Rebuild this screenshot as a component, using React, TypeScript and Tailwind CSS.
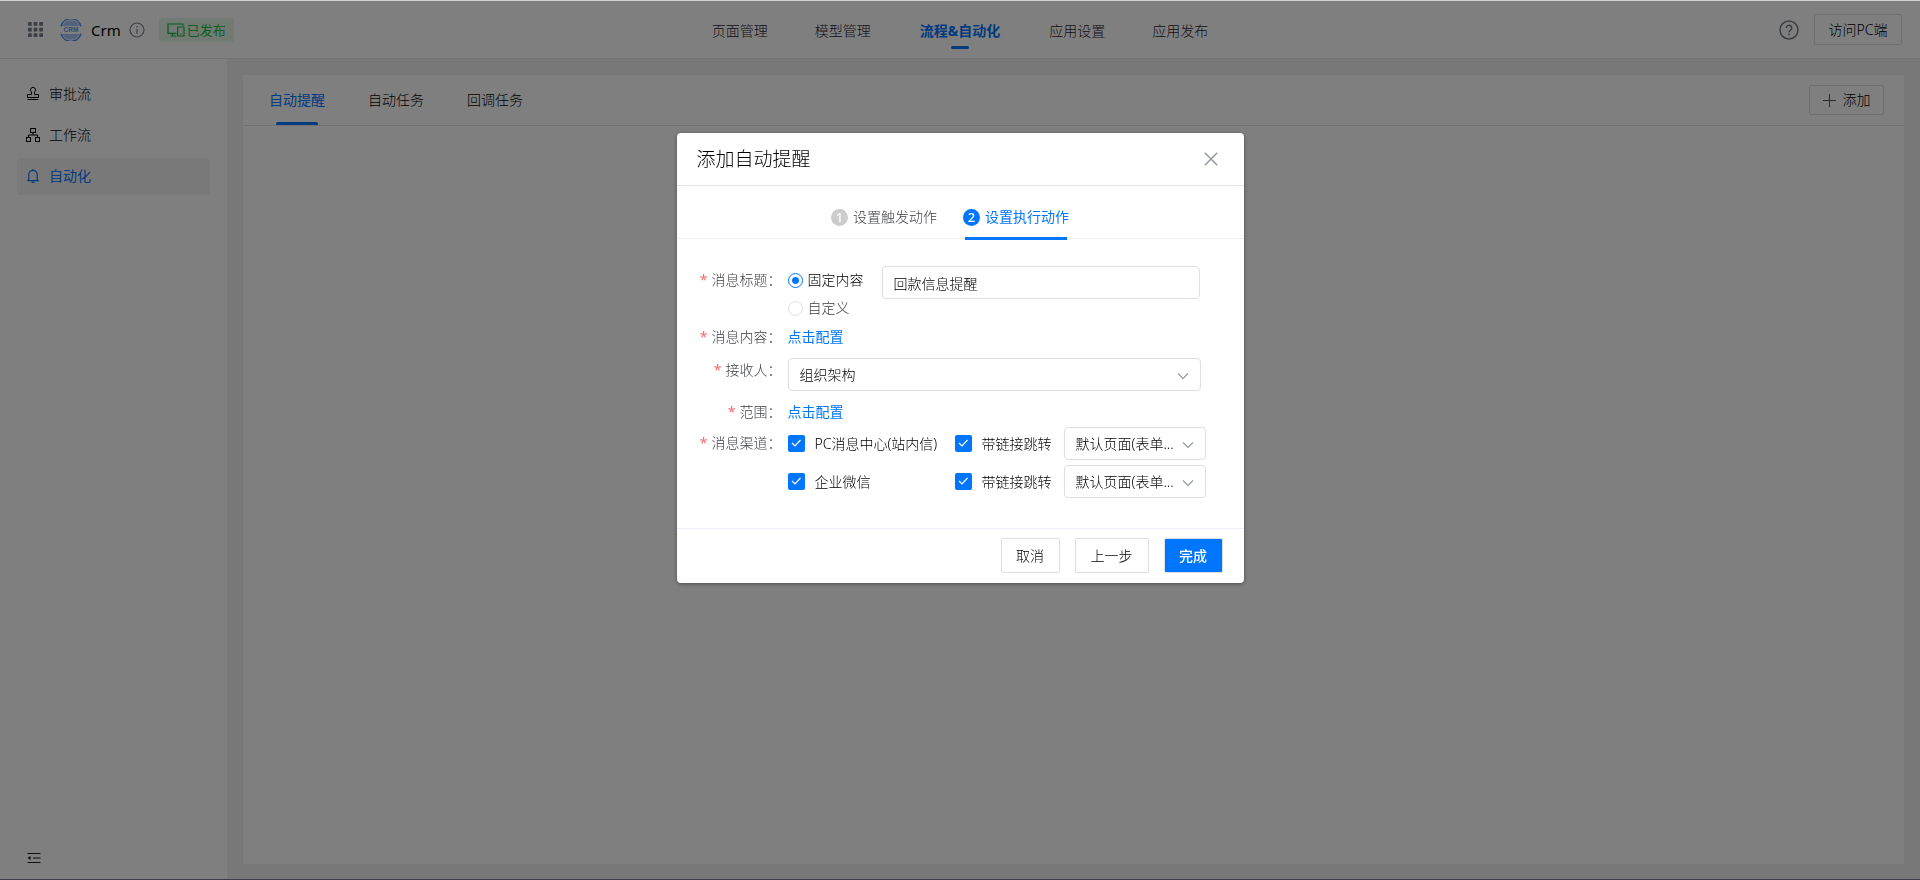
import React, { useState } from 'react';
import type { ReactNode } from 'react';

const TOP_NAV = ['页面管理', '模型管理', '流程&自动化', '应用设置', '应用发布'];
const TABS = ['自动提醒', '自动任务', '回调任务'];
const CHANNELS = ['PC消息中心(站内信)', '企业微信'];

interface IconProps {
  className?: string;
}

function AppsIcon({ className }: IconProps) {
  return (
    <svg viewBox="0 0 16 16" className={className} fill="currentColor" aria-hidden="true">
      {[0, 6, 12].map((y) => [0, 6, 12].map((x) => <rect key={`${x}-${y}`} x={x} y={y} width="4" height="4" rx="0.5" />))}
    </svg>
  );
}

function CrmLogo({ className }: IconProps) {
  return (
    <svg viewBox="0 0 22 22" className={className} aria-hidden="true">
      <path d="M2 7a10 10 0 0 1 18 0z" fill="#a8c6fa" />
      <path d="M2 15a10 10 0 0 0 18 0z" fill="#a8c6fa" />
      <path d="M1 7.2a10.4 10.4 0 0 1 20 0M1 14.8a10.4 10.4 0 0 0 20 0" fill="none" stroke="#4a86f0" strokeWidth="1.4" />
      <text x="11" y="13.3" textAnchor="middle" fontSize="6.5" fontWeight="700" fill="#5f92ee" fontFamily="Liberation Sans, sans-serif">
        CRM
      </text>
    </svg>
  );
}

function InfoIcon({ className }: IconProps) {
  return (
    <svg viewBox="0 0 16 16" className={className} fill="none" stroke="currentColor" strokeWidth="1.2" aria-hidden="true">
      <circle cx="8" cy="8" r="7" />
      <path d="M8 7v5M8 4v1.5" />
    </svg>
  );
}

function DevicesIcon({ className }: IconProps) {
  return (
    <svg viewBox="0 0 18 14" className={className} fill="none" stroke="currentColor" strokeWidth="1.2" aria-hidden="true">
      <path d="M9.5 10.4H1V1h15v1.8M5.5 10.4v2.4M3.5 13h6" />
      <rect x="10.6" y="4" width="6.4" height="9" rx="0.6" />
      <path d="M13 11h1.6" />
    </svg>
  );
}

function HelpIcon({ className }: IconProps) {
  return (
    <svg viewBox="0 0 20 20" className={className} fill="none" stroke="currentColor" strokeWidth="1.5" aria-hidden="true">
      <circle cx="10" cy="10" r="9" />
      <path d="M7.3 8a2.7 2.7 0 1 1 4.3 2.1c-1 .7-1.6 1.1-1.6 2.2" />
      <path d="M10 13.6v1.6" />
    </svg>
  );
}

function StampIcon({ className }: IconProps) {
  return (
    <svg viewBox="0 0 16 16" className={className} fill="none" stroke="currentColor" strokeWidth="1" aria-hidden="true">
      <path d="M6.5 8.5V6.1a2.6 2.6 0 1 1 3 0v2.4h4v3h-11v-3zM2.5 13.5h11" />
    </svg>
  );
}

function FlowIcon({ className }: IconProps) {
  return (
    <svg viewBox="0 0 16 16" className={className} fill="none" stroke="currentColor" strokeWidth="1" aria-hidden="true">
      <rect x="5.5" y="1.5" width="5" height="4" />
      <rect x="1.5" y="10.5" width="4" height="4" />
      <rect x="10.5" y="10.5" width="4" height="4" />
      <path d="M8 5.5v2.5M3.5 10.5V8h9v2.5" />
    </svg>
  );
}

function BellIcon({ className }: IconProps) {
  return (
    <svg viewBox="0 0 16 16" className={className} fill="none" stroke="currentColor" strokeWidth="1.2" aria-hidden="true">
      <path d="M3.8 12.4V6.6a4.2 4.2 0 0 1 8.4 0v5.8M2.2 12.6h11.6M8 1v1.4M6.6 14.4h2.8" />
    </svg>
  );
}

function CollapseIcon({ className }: IconProps) {
  return (
    <svg viewBox="0 0 14 12" className={className} fill="none" stroke="currentColor" strokeWidth="1" aria-hidden="true">
      <path d="M.5 1.5h13M6 6h7.5M.5 10.5h13" />
      <path d="M.5 6 3.5 4v4z" fill="currentColor" stroke="none" />
    </svg>
  );
}

function ChevronIcon({ className }: IconProps) {
  return (
    <svg viewBox="0 0 12 8" className={className} fill="none" stroke="currentColor" strokeWidth="1.1" aria-hidden="true">
      <path d="m1 1.5 5 5 5-5" />
    </svg>
  );
}

const MENU = [
  { label: '审批流', Icon: StampIcon },
  { label: '工作流', Icon: FlowIcon },
  { label: '自动化', Icon: BellIcon },
];

function Header() {
  return (
    <header className="grid h-[59px] grid-cols-[1fr_auto_1fr] items-center border-t border-b border-t-[#d0d0d0] border-b-[#e4e4e4] bg-white pl-7 pr-[18px]">
      <div className="flex items-center">
        <button type="button" aria-label="应用列表" className="text-[#777d88]">
          <AppsIcon className="size-[15px]" />
        </button>
        <CrmLogo className="ml-[17px] size-[22px]" />
        <span className="ml-[9px] text-[15px] font-normal text-black">Crm</span>
        <InfoIcon className="ml-2 size-4 text-[#777d88]" />
        <span className="ml-3.5 flex h-6 items-center gap-0.5 rounded-xs bg-[#e3f7e8] px-2 text-[13px] font-normal text-[#12b83f]">
          <DevicesIcon className="h-3.5 w-[18px]" />
          已发布
        </span>
      </div>

      <nav className="mr-2.5 flex h-full items-center gap-[47px] text-[#1f242e]">
        {TOP_NAV.map((item) => {
          const active = item === '流程&自动化';
          return (
            <a
              key={item}
              href="#"
              className={active ? 'relative flex h-full items-center px-0.5 pt-0.5 font-bold text-[#0076ff]' : 'flex h-full items-center pt-0.5'}
            >
              {item}
              {active && <span className="absolute bottom-[9px] left-1/2 h-[3px] w-[18px] -translate-x-1/2 rounded-full bg-[#0076ff]" />}
            </a>
          );
        })}
      </nav>

      <div className="flex items-center justify-end gap-[15px]">
        <button type="button" aria-label="帮助" className="text-[#777d88]">
          <HelpIcon className="size-5" />
        </button>
        <button type="button" className="h-[31px] w-[88px] rounded-xs border border-[#dcdcdc] text-black">
          访问PC端
        </button>
      </div>
    </header>
  );
}

function Sidebar() {
  return (
    <aside className="flex w-[227px] shrink-0 flex-col justify-between bg-white pt-[17px] pb-[15px]">
      <ul className="flex flex-col gap-1 px-[17px]">
        {MENU.map(({ label, Icon }) => (
          <li key={label}>
            <a
              href="#"
              className={
                label === '自动化'
                  ? 'flex h-[37px] items-center gap-2 rounded-sm bg-[#f2f2f2] pb-0.5 pl-2 font-normal text-[#0076ff]'
                  : 'flex h-[37px] items-center gap-2 pb-0.5 pl-2 text-black'
              }
            >
              <Icon className="size-4" />
              {label}
            </a>
          </li>
        ))}
      </ul>
      <button type="button" aria-label="收起菜单" className="ml-[27px] w-3.5 text-[#1a1a1a]">
        <CollapseIcon className="h-3 w-3.5" />
      </button>
    </aside>
  );
}

interface FormRowProps {
  label: string;
  className?: string;
  labelClass: string;
  children: ReactNode;
}

function FormRow({ label, className = '', labelClass, children }: FormRowProps) {
  return (
    <div className={`flex gap-1.5 ${className}`}>
      <span className={`w-[105px] shrink-0 text-right text-[#3e4045] ${labelClass}`}>
        <span className="mr-1 font-normal text-[#f56c6c]">*</span>
        {label}：
      </span>
      {children}
    </div>
  );
}

function SelectBox({ label, value, className }: { label: string; value: string; className: string }) {
  return (
    <div className={`relative ${className}`}>
      <select
        aria-label={label}
        className="h-[33px] w-full appearance-none rounded-sm border border-[#dcdfe6] bg-white pl-[11px] pr-6 text-black outline-none"
      >
        <option>{value}</option>
      </select>
      <ChevronIcon className="pointer-events-none absolute top-3.5 right-3 h-2 w-3 text-[#8f959e]" />
    </div>
  );
}

function CheckField({ label }: { label: string }) {
  return (
    <label className="flex items-center gap-2.5 whitespace-nowrap text-black">
      <span className="grid size-[17px] shrink-0">
        <input type="checkbox" defaultChecked className="col-start-1 row-start-1 size-[17px] appearance-none rounded-xs bg-[#0076ff]" />
        <svg
          viewBox="0 0 17 17"
          className="pointer-events-none col-start-1 row-start-1 size-[17px]"
          fill="none"
          stroke="white"
          strokeWidth="1.2"
          aria-hidden="true"
        >
          <path d="m4 8 3 3 5.5-6" />
        </svg>
      </span>
      {label}
    </label>
  );
}

function Step({ index, label, active }: { index: number; label: string; active?: boolean }) {
  return (
    <li
      className={
        active ? 'relative flex items-center gap-[5px] pt-2.5 font-normal text-[#0076ff]' : 'flex items-center gap-[5px] pt-2.5 text-[#3e4045]'
      }
    >
      <span
        className={
          active
            ? 'flex size-[17px] items-center justify-center rounded-full bg-[#0076ff] text-[13px] font-medium text-white'
            : 'flex size-[17px] items-center justify-center rounded-full bg-[#cccccc] text-[13px] font-medium text-white'
        }
      >
        {index}
      </span>
      {label}
      {active && <span className="absolute inset-x-0.5 -bottom-0.5 h-[3px] bg-[#0076ff]" />}
    </li>
  );
}

const RADIO =
  'size-[15px] appearance-none rounded-full border border-[#dcdfe6] bg-white checked:border-[#0076ff] checked:bg-[radial-gradient(circle,#0076ff_3px,white_4px)]';

function ReminderDialog() {
  const [mode, setMode] = useState('fixed');
  const [title, setTitle] = useState('回款信息提醒');

  return (
    <section role="dialog" aria-labelledby="dialog-title" className="w-[567px] rounded-sm bg-white shadow-[0_1px_4px_rgba(0,0,0,0.4)]">
      <div className="flex h-[53px] items-center justify-between border-b border-[#e4e7ed] pl-5 pr-[26px]">
        <h2 id="dialog-title" className="text-[19px] text-black">
          添加自动提醒
        </h2>
        <button type="button" aria-label="关闭" className="text-[#8f959e]">
          <svg viewBox="0 0 14 14" className="size-3.5" fill="none" stroke="currentColor" strokeWidth="1.4" aria-hidden="true">
            <path d="m.8.8 12.4 12.4M13.2.8.8 13.2" />
          </svg>
        </button>
      </div>

      <ol className="flex h-[53px] justify-center gap-[26px] border-b border-[#ebeef5] pr-5">
        <Step index={1} label="设置触发动作" />
        <Step index={2} label="设置执行动作" active />
      </ol>

      <form className="pt-[27px] pb-[30px]">
        <FormRow label="消息标题" labelClass="leading-7">
          <div className="w-[94px] shrink-0">
            <label className={mode === 'fixed' ? 'flex h-7 items-center gap-[5px] text-black' : 'flex h-7 items-center gap-[5px] text-[#3e4045]'}>
              <input type="radio" name="mode" className={RADIO} checked={mode === 'fixed'} onChange={() => setMode('fixed')} />
              固定内容
            </label>
            <label className={mode === 'custom' ? 'flex h-7 items-center gap-[5px] text-black' : 'flex h-7 items-center gap-[5px] text-[#3e4045]'}>
              <input type="radio" name="mode" className={RADIO} checked={mode === 'custom'} onChange={() => setMode('custom')} />
              自定义
            </label>
          </div>
          <input
            type="text"
            aria-label="消息标题"
            value={title}
            onChange={(e) => setTitle(e.target.value)}
            className="-ml-1.5 h-[33px] w-[318px] rounded-sm border border-[#dcdfe6] px-[11px] text-black outline-none"
          />
        </FormRow>
        <FormRow label="消息内容" className="mt-px" labelClass="leading-7">
          <a href="#" className="leading-7 font-normal text-[#0076ff]">点击配置</a>
        </FormRow>
        <FormRow label="接收人" className="mt-[7px]" labelClass="leading-6">
          <SelectBox label="接收人" value="组织架构" className="w-[413px]" />
        </FormRow>
        <FormRow label="范围" className="mt-[7px]" labelClass="leading-7">
          <a href="#" className="leading-7 font-normal text-[#0076ff]">点击配置</a>
        </FormRow>
        <FormRow label="消息渠道" className="mt-px" labelClass="leading-8">
          <div className="grid grid-cols-[167px_109px_142px] gap-y-[5px]">
            {CHANNELS.map((channel) => (
              <React.Fragment key={channel}>
                <CheckField label={channel} />
                <CheckField label="带链接跳转" />
                <SelectBox label={`${channel}跳转页面`} value="默认页面(表单..." className="w-full" />
              </React.Fragment>
            ))}
          </div>
        </FormRow>
      </form>

      <div className="flex justify-end gap-[15px] border-t border-[#ebeef5] pt-[9px] pr-[21px] pb-2.5 text-black">
        <button type="button" className="h-[35px] w-[59px] rounded-xs border border-[#dcdfe6]">
          取消
        </button>
        <button type="button" className="h-[35px] w-[74px] rounded-xs border border-[#dcdfe6]">
          上一步
        </button>
        <button type="button" className="h-[35px] w-[59px] rounded-xs border border-[#dcdfe6] bg-[#0076ff] font-medium text-white">
          完成
        </button>
      </div>
    </section>
  );
}

export default function App() {
  return (
    <div
      lang="zh-CN"
      className="flex min-h-screen flex-col border-b border-[#7c7c8e] bg-[#f0f0f0] font-['Noto_Sans','Noto_Sans_CJK_SC',sans-serif] text-[14px] leading-5 font-light"
    >
      <Header />
      <div className="flex flex-1">
        <Sidebar />
        <main className="flex flex-1 flex-col px-4 pt-4 pb-[15px]">
          <div className="flex-1 bg-white">
            <div className="flex h-[51px] items-center justify-between border-b border-[#e4e4e4] pl-[26px] pr-5">
              <nav className="flex h-full gap-[43px] text-black">
                {TABS.map((tab) => {
                  const active = tab === '自动提醒';
                  return (
                    <a key={tab} href="#" className={active ? 'relative flex items-center font-normal text-[#0076ff]' : 'flex items-center'}>
                      {tab}
                      {active && <span className="absolute inset-x-[7px] bottom-0 h-[3px] rounded-t-xs bg-[#0076ff]" />}
                    </a>
                  );
                })}
              </nav>
              <button
                type="button"
                className="flex h-[30px] w-[75px] items-center justify-center gap-[7px] rounded-xs border border-[#dcdcdc] text-black"
              >
                <svg viewBox="0 0 13 13" className="size-[13px] text-[#555]" fill="none" stroke="currentColor" strokeWidth="1" aria-hidden="true">
                  <path d="M6.5 0v13M0 6.5h13" />
                </svg>
                添加
              </button>
            </div>
          </div>
        </main>
      </div>

      <div className="fixed inset-x-0 top-px bottom-0 flex items-start justify-center bg-black/50 pt-[132px]">
        <ReminderDialog />
      </div>
    </div>
  );
}
